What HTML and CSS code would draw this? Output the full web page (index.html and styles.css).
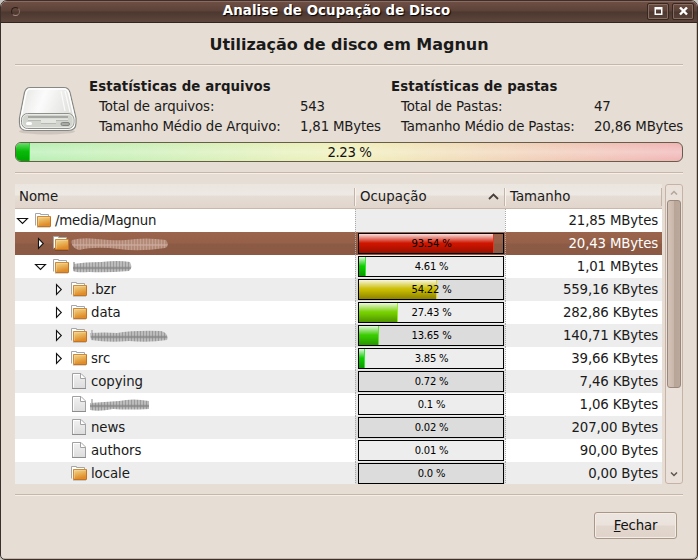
FILE: index.html
```html
<!DOCTYPE html>
<html lang="pt-BR">
<head>
<meta charset="utf-8">
<title>Analise de Ocupação de Disco</title>
<link rel="stylesheet" href="styles.css">
</head>
<body>
<svg class="defs" width="0" height="0">
  <defs>
    <linearGradient id="folderFill" x1="0" y1="0" x2=".3" y2="1">
      <stop offset="0" stop-color="#f3dca6"/><stop offset=".5" stop-color="#eab65c"/><stop offset="1" stop-color="#e08c2a"/>
    </linearGradient>
    <linearGradient id="fileFill" x1="0" y1="0" x2="0" y2="1">
      <stop offset="0" stop-color="#f2f2f2"/><stop offset="1" stop-color="#dcdcdc"/>
    </linearGradient>
    <linearGradient id="driveTop" x1="0" y1="0" x2="1" y2=".3">
      <stop offset="0" stop-color="#e2e3e0"/><stop offset=".45" stop-color="#fbfbfb"/><stop offset="1" stop-color="#dfe0dc"/>
    </linearGradient>
    <pattern id="weave" width="3" height="16" patternUnits="userSpaceOnUse">
      <rect width="3" height="16" fill="#bcbcbc"/><path d="M.5 0V16" stroke="#9a9a9a"/><path d="M0 9H3" stroke="#858585" stroke-width="2.500" stroke-opacity=".7"/>
    </pattern>
    <pattern id="weaveLight" width="3" height="16" patternUnits="userSpaceOnUse">
      <rect width="3" height="16" fill="#b48a79"/><path d="M.5 0V16" stroke="#c4a091"/><path d="M0 9H3" stroke="#cdaea1" stroke-width="2" stroke-opacity=".6"/>
    </pattern>
    <symbol id="folder" viewBox="0 0 18 16">
      <path d="M1.500 13.500V1.500H6.500V2.500H14.500V5" fill="#fff" stroke="#a6a6a6"/>
      <path d="M3 15.300H16" stroke="#0003"/>
      <rect x="3" y="4" width="14" height="11" rx="1" fill="#c8741f"/>
      <rect x="3" y="4" width="13" height="10" rx=".6" fill="url(#folderFill)"/>
      <path d="M3.500 14V4.500H16" fill="none" stroke="#cd8a38"/>
      <path d="M4.500 13.500V5.500H15.500" fill="none" stroke="#f7dc9d" stroke-opacity=".45"/>
    </symbol>
    <symbol id="file" viewBox="0 0 18 16">
      <path d="M2.500.5H11L15.500 5V15.500H2.500Z" fill="url(#fileFill)" stroke="#a2a2a2"/>
      <path d="M3.500 14.500V1.500H10" fill="none" stroke="#fff"/>
      <path d="M10.500 1V5.500H15.500" fill="#fff" stroke="#a2a2a2"/>
      <path d="M2 15.500H16" stroke="#8d8d8d"/>
    </symbol>
    <symbol id="closed" viewBox="0 0 13 13"><path d="M4.500 1.500V11.500L9.300 6.500Z" fill="#fff" stroke="#111" stroke-width="1.100"/></symbol>
    <symbol id="open" viewBox="0 0 13 13"><path d="M1.500 4.500H11.500L6.500 9.500Z" fill="#fff" stroke="#111" stroke-width="1.100"/></symbol>
  </defs>
</svg>
<div class="window">
  <header class="titlebar">
    <span class="menu-dot"></span>
    <h1>Analise de Ocupação de Disco</h1>
    <div class="controls">
      <span class="control"><svg width="9" height="9" viewBox="0 0 9 9"><path d="M.5 0H8.500V8H.5ZM2 2.500V6.500H7V2.500Z" fill="#fff" fill-rule="evenodd"/></svg></span>
      <span class="control"><svg width="9" height="9" viewBox="0 0 9 9"><path d="M1 .5L8 7.500M8 .5L1 7.500" stroke="#fff" stroke-width="2.400"/></svg></span>
    </div>
  </header>
  <main class="content">
    <h2>Utilização de disco em Magnun</h2>
    <div class="rule"></div>
    <section class="stats">
      <svg class="drive" width="62" height="52" viewBox="0 0 62 52">
        <ellipse cx="31" cy="45.500" rx="28" ry="3" fill="#000" fill-opacity=".1"/>
        <path d="M14 1.500H48Q52.500 1.500 54 6.500L60 32V37Q60 44.500 52 44.500H11Q3.500 44.500 3.500 37V32L8.500 6.500Q10 1.500 14 1.500Z" fill="url(#driveTop)" stroke="#868884" stroke-width="1.200"/>
        <path d="M14 3H48Q51.500 3 52.700 7L58.500 32V37Q58.500 43 52 43H11Q5 43 5 37V32L10 7Q11 3 14 3Z" fill="none" stroke="#fff" stroke-width="1.500"/>
        <path d="M45 5L49 25M49 5L54 26" stroke="#fff" stroke-width="1.200" opacity=".8"/>
        <rect x="5.500" y="27.500" width="52.500" height="15" rx="6" fill="#d1d4cd" stroke="#8e918b"/>
        <rect x="6.500" y="28.500" width="50.500" height="13" rx="5" fill="none" stroke="#e9ebe6"/>
        <path d="M12 31H52" stroke="#969993" stroke-width="1.500"/>
        <path d="M12 32.500H52V34H40V37H25V34H12Z" fill="#e3e5e0"/>
        <path d="M12 34.500H25M40 34.500H52M25 37.500H40" fill="none" stroke="#b7bab3"/>
        <rect x="10" y="36" width="6" height="3" rx="1.500" fill="#fff"/>
        <rect x="45" y="36.500" width="8.500" height="3" rx="1.500" fill="#a8aaa5" stroke="#83867f"/>
      </svg>
      <dl class="files">
        <dt class="heading">Estatísticas de arquivos</dt>
        <dt>Total de arquivos:</dt><dd>543</dd>
        <dt>Tamanho Médio de Arquivo:</dt><dd>1,81 MBytes</dd>
      </dl>
      <dl class="folders">
        <dt class="heading">Estatísticas de pastas</dt>
        <dt>Total de Pastas:</dt><dd>47</dd>
        <dt>Tamanho Médio de Pastas:</dt><dd>20,86 MBytes</dd>
      </dl>
    </section>
    <div class="usage"><span class="usage-fill"></span><span class="usage-text">2.23 %</span></div>
    <div class="rule"></div>
    <section class="browser">
      <div class="tree">
        <div class="row head">
          <div class="th">Nome</div>
          <div class="th">Ocupação<svg width="11" height="7" viewBox="0 0 11 7"><path d="M1 6L5.500 1.500L10 6" fill="none" stroke="#463f3b" stroke-width="1.800"/></svg></div>
          <div class="th">Tamanho</div>
        </div>
        <div class="row"><div class="name"><svg class="arrow"><use href="#open"/></svg><svg class="icon"><use href="#folder"/></svg>/media/Magnun</div><div class="occ"></div><div class="size">21,85 MBytes</div></div>
        <div class="row selected"><div class="name l1"><svg class="arrow"><use href="#closed"/></svg><svg class="icon"><use href="#folder"/></svg><svg class="smudge" width="98" height="16" viewBox="0 0 98 16"><path d="M1 4Q12 1 26 3Q45 5 55 4Q75 1 95 4Q99 10 94 12Q68 16 48 13Q24 10 8 14Q-1 11 1 4Z" fill="url(#weaveLight)"/></svg></div><div class="occ"><div class="bar"><i class="red" style="width:93.54%"></i><b>93.54 %</b></div></div><div class="size">20,43 MBytes</div></div>
        <div class="row"><div class="name l1"><svg class="arrow"><use href="#open"/></svg><svg class="icon"><use href="#folder"/></svg><svg class="smudge" width="62" height="16" viewBox="0 0 62 16"><path d="M3 3V12" stroke="#777"/><path d="M2 5Q14 3 30 3Q48 1 59 3Q62 10 58 12Q35 14 18 13Q6 14 2 12Z" fill="url(#weave)"/></svg></div><div class="occ"><div class="bar"><i class="green" style="width:4.61%"></i><b>4.61 %</b></div></div><div class="size">1,01 MBytes</div></div>
        <div class="row"><div class="name l2"><svg class="arrow"><use href="#closed"/></svg><svg class="icon"><use href="#folder"/></svg>.bzr</div><div class="occ"><div class="bar"><i class="yellow" style="width:54.22%"></i><b>54.22 %</b></div></div><div class="size">559,16 KBytes</div></div>
        <div class="row"><div class="name l2"><svg class="arrow"><use href="#closed"/></svg><svg class="icon"><use href="#folder"/></svg>data</div><div class="occ"><div class="bar"><i class="lime" style="width:27.43%"></i><b>27.43 %</b></div></div><div class="size">282,86 KBytes</div></div>
        <div class="row"><div class="name l2"><svg class="arrow"><use href="#closed"/></svg><svg class="icon"><use href="#folder"/></svg><svg class="smudge" width="80" height="16" viewBox="0 0 80 16"><path d="M3 2V12" stroke="#999"/><path d="M1 5Q16 4 28 5Q45 2 72 3Q80 5 78 12Q60 15 40 13Q20 15 2 12Z" fill="url(#weave)"/></svg></div><div class="occ"><div class="bar"><i class="leaf" style="width:13.65%"></i><b>13.65 %</b></div></div><div class="size">140,71 KBytes</div></div>
        <div class="row"><div class="name l2"><svg class="arrow"><use href="#closed"/></svg><svg class="icon"><use href="#folder"/></svg>src</div><div class="occ"><div class="bar"><i class="green" style="width:3.85%"></i><b>3.85 %</b></div></div><div class="size">39,66 KBytes</div></div>
        <div class="row"><div class="name l2"><span class="arrow"></span><svg class="icon"><use href="#file"/></svg>copying</div><div class="occ"><div class="bar"><b>0.72 %</b></div></div><div class="size">7,46 KBytes</div></div>
        <div class="row"><div class="name l2"><span class="arrow"></span><svg class="icon"><use href="#file"/></svg><svg class="smudge" width="62" height="16" viewBox="0 0 62 16"><path d="M3 2V12" stroke="#888"/><path d="M1 6Q15 5 30 4Q44 1 60 4V12Q40 13 24 12Q10 15 1 13Z" fill="url(#weave)"/></svg></div><div class="occ"><div class="bar"><b>0.1 %</b></div></div><div class="size">1,06 KBytes</div></div>
        <div class="row"><div class="name l2"><span class="arrow"></span><svg class="icon"><use href="#file"/></svg>news</div><div class="occ"><div class="bar"><b>0.02 %</b></div></div><div class="size">207,00 Bytes</div></div>
        <div class="row"><div class="name l2"><span class="arrow"></span><svg class="icon"><use href="#file"/></svg>authors</div><div class="occ"><div class="bar"><b>0.01 %</b></div></div><div class="size">90,00 Bytes</div></div>
        <div class="row"><div class="name l2"><span class="arrow"></span><svg class="icon"><use href="#folder"/></svg>locale</div><div class="occ"><div class="bar"><b>0.0 %</b></div></div><div class="size">0,00 Bytes</div></div>
      </div>
      <div class="scrollbar">
        <svg width="8" height="5" viewBox="0 0 8 5"><path d="M1 4.500L4 1.500L7 4.500" fill="none" stroke="#b3a79c" stroke-width="1.500"/></svg>
        <div class="thumb"></div>
        <svg class="down" width="8" height="5" viewBox="0 0 8 5"><path d="M1 .5L4 3.500L7 .5" fill="none" stroke="#5f5751" stroke-width="1.500"/></svg>
      </div>
    </section>
    <div class="rule"></div>
    <footer><button type="button"><span><u>F</u>echar</span></button></footer>
  </main>
</div>
</body>
</html>
```
FILE: styles.css
```css
* { box-sizing: border-box; }
body {
  margin: 0;
  width: 698px;
  height: 560px;
  overflow: hidden;
  background: #c9c5c0;
  font: 13.33px/20px "DejaVu Sans", sans-serif;
  color: #1a1a1a;
}
.defs { position: absolute; }
.window {
  height: 560px;
  border: 1px solid #3a2f2b;
  border-radius: 7px 7px 5px 5px;
  background: #e6ddd4;
  overflow: hidden;
  box-shadow: inset -1px -1px #c3b5a7;
}
.titlebar {
  height: 22px;
  display: grid;
  grid-template-columns: 35px 1fr 60px;
  align-items: center;
  background: linear-gradient(#8d6a5f 0 1px, #70503f 1px, #6c4d43 2px, #5b4238 10px, #4c382f 11px, #5d453c 21px, #33241e 21px);
}
.menu-dot {
  width: 9px;
  height: 9px;
  margin: 0 0 2px 10px;
  border: 1px solid #2c1f1a;
  border-bottom-color: #a38c83;
  border-right-color: #8b7067;
  border-radius: 50%;
}
h1 {
  margin: 0;
  font-size: 13.33px;
  line-height: 18px;
  letter-spacing: .1px;
  text-align: center;
  padding-bottom: 2px;
  color: #fff;
  text-shadow: 1px 1px 1px #000;
  white-space: nowrap;
}
.controls { display: flex; justify-content: flex-end; gap: 3px; padding-right: 3px; padding-bottom: 1px; }
.control {
  width: 22px;
  height: 17px;
  display: flex;
  align-items: center;
  justify-content: center;
  border: 1px solid #38271f;
  border-radius: 2px;
  box-shadow: inset 0 0 0 1px #846c62;
}
.content { padding: 0 14px; }
h2 {
  margin: 0;
  height: 41px;
  font-size: 16px;
  line-height: 43px;
  letter-spacing: -.03px;
  text-align: center;
}
.rule { height: 2px; background: linear-gradient(#c8b6a7 50%, #f4efea 50%); }
.stats { display: flex; height: 76px; padding-top: 11px; }
.drive { margin: 9px 13px 0 1px; flex: none; }
dl { margin: 0; display: grid; grid-template-rows: repeat(3, 20px); white-space: nowrap; align-content: start; }
.files { width: 302px; grid-template-columns: 211px 1fr; margin-left: -2px; flex: none; }
.folders { grid-template-columns: 203px 1fr; }
dt { padding-left: 10px; letter-spacing: -.14px; }
dd { margin: 0; letter-spacing: -.18px; }
.heading { grid-column: 1 / 3; font-weight: bold; padding: 0; letter-spacing: .08px; }
.usage {
  position: relative;
  height: 20px;
  margin-bottom: 10px;
  border: 1px solid #665d4b;
  border-radius: 6px;
  overflow: hidden;
  text-align: center;
  line-height: 20px;
  background: linear-gradient(#fff0, #fff4 50%, #fff0), linear-gradient(90deg, #b5efb4, #f1f0bb 50%, #f0b4b5);
}
.usage-fill {
  position: absolute;
  inset: 0 auto 0 0;
  width: 14px;
  border-right: 1px solid #32d532;
  background: linear-gradient(#6add6a, #09bb09 45%, #00a400);
}
.usage-text { color: #111; letter-spacing: -.4px; padding-left: 1px; }
.browser { display: flex; gap: 3px; height: 300px; margin: 10px 0; }
.tree { width: 647px; height: 300px; overflow: hidden; }
.row { display: grid; grid-template-columns: 340px 150px 157px; height: 23px; background: #fff; }
.row:nth-child(odd) { background: #ededed; }
.row.head {
  height: 25px;
  border-bottom: 1px solid #cbb8aa;
  background: linear-gradient(#ebe5df, #eee9e4 11px, #e5ddd6 12px, #e1d5cb);
}
.th { display: flex; align-items: center; justify-content: space-between; padding: 0 5px 1px; margin: 4px 0 3px; line-height: 17px; border-right: 1px solid #c5b3a5; box-shadow: 1px 0 #f7f3f0; }
.th:first-child { padding-left: 4px; }
.name { display: flex; align-items: center; padding-left: 1px; border-right: 1px dotted #aaa; width: 341px; z-index: 1; letter-spacing: -.2px; }
.l1 { padding-left: 19px; }
.l2 { padding-left: 37px; letter-spacing: -.08px; }
.arrow { width: 13px; height: 13px; flex: none; margin-bottom: 1px; }
.icon { width: 18px; height: 16px; margin: 0 3px 1px 5px; flex: none; }
.smudge { margin-left: -2px; filter: blur(.6px); }
.occ { padding: 1px 1px 1px 3px; background: #ededed; }
.row:nth-child(odd) .occ { background: #dcdcdc; }
.bar { position: relative; height: 21px; border: 1px solid #000; display: flex; align-items: center; justify-content: center; }
.bar i {
  position: absolute;
  inset: 0 auto 0 0;
  --c: #0c0;
  --d: #009800;
  --e: #32e632;
  border-right: 1px solid var(--e);
  background: linear-gradient(#fffd, #fff0 48%), linear-gradient(var(--c) 52%, var(--d));
}
.bar .red { --c: #cf1500; --d: #981000; --e: #d63d27; }
.bar .yellow { --c: #cabc00; --d: #8c8200; --e: #e3d52a; }
.bar .lime { --c: #76d000; --d: #4f9200; --e: #9be931; }
.bar .leaf { --c: #38cc00; --d: #279500; --e: #62e332; }
.bar .green { --c: #0fcc00; --d: #0a9800; }
.bar b { position: relative; font-size: 10px; line-height: 19px; letter-spacing: -.2px; padding-left: 1px; font-weight: normal; color: #000; }
.size { text-align: right; padding-right: 4px; line-height: 23px; letter-spacing: -.15px; border-left: 1px dotted #aaa; }
.row.selected, .row.selected .occ { background: linear-gradient(#9b644c, #966048 48%, #8c5b46 52%, #8b5944); }
.selected .size { color: #fff; }
.scrollbar {
  width: 18px;
  border: 1px solid #c6b3a5;
  border-radius: 3px;
  background: #e9e1da;
  padding: 5px 1px;
  display: flex;
  flex-direction: column;
  align-items: center;
}
.scrollbar svg { flex: none; }
.thumb {
  width: 14px;
  height: 188px;
  margin-top: 5px;
  border: 1px solid #9b887b;
  border-radius: 3px;
  background: linear-gradient(90deg, #d4c3b7, #c8b6aa 50%, #b8a597 52%, #baa99c);
}
.down { margin: auto 0 1px; }
footer { display: flex; justify-content: flex-end; padding: 16px 6px 0; }
button {
  width: 83px;
  height: 27px;
  padding: 0;
  border: 1px solid #a99888;
  border-radius: 3px;
  background: linear-gradient(#ece5df, #ebe2dc 48%, #e2d7ce 52%, #e0d3c9);
  box-shadow: inset 0 0 0 1px #f3ece7;
  font: inherit;
  letter-spacing: -.2px;
  color: #111;
}
```
